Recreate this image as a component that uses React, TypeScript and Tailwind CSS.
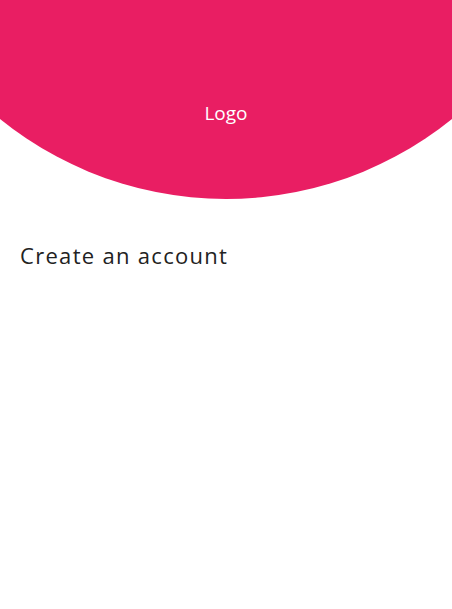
export default function App() {
  return (
    <div className="min-h-[609px] w-full bg-white" style={{ fontFamily: '"Open Sans", "Noto Sans", sans-serif' }}>
      <div className="flex h-[200px] w-full justify-center bg-[#e91e63] pt-[99px] [clip-path:circle(359px_at_50%_-160px)]">
        <span className="text-[19px] leading-[28px] text-white">Logo</span>
      </div>
      <div className="px-5 pt-10">
        <h1 className="text-[22px] leading-[31px] tracking-[1.3px] text-[#222222]">Create an account</h1>
      </div>
    </div>
  );
}
